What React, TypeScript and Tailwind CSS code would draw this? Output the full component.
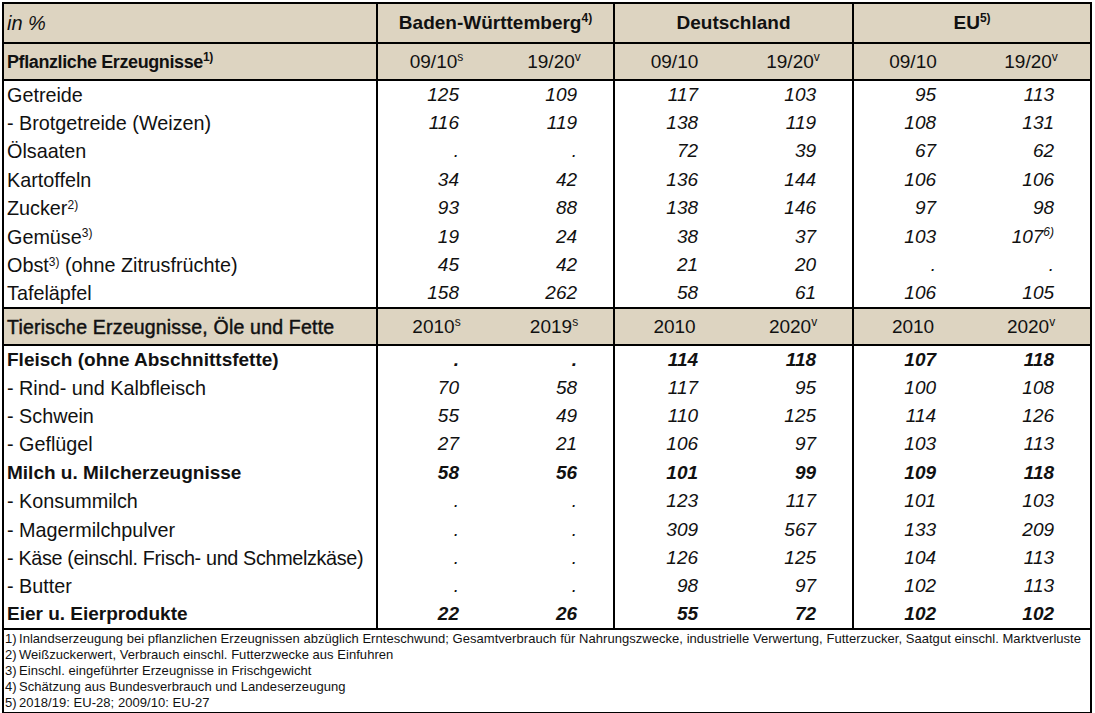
import React from "react";

type Row = {
  label: React.ReactNode;
  vals: React.ReactNode[];
  bold?: boolean;
  tight?: boolean;
};

const S = ({ children }: { children: React.ReactNode }) => (
  <sup className="text-[12px] top-[-0.55em]">{children}</sup>
);

const plant: Row[] = [
  { label: "Getreide", vals: ["125", "109", "117", "103", "95", "113"] },
  { label: "- Brotgetreide (Weizen)", vals: ["116", "119", "138", "119", "108", "131"] },
  { label: "Ölsaaten", vals: [".", ".", "72", "39", "67", "62"] },
  { label: "Kartoffeln", vals: ["34", "42", "136", "144", "106", "106"] },
  { label: <>Zucker<S>2)</S></>, vals: ["93", "88", "138", "146", "97", "98"] },
  {
    label: <>Gemüse<S>3)</S></>,
    vals: ["19", "24", "38", "37", "103", <>107<S>6)</S></>],
  },
  {
    label: <>Obst<S>3)</S> (ohne Zitrusfrüchte)</>,
    vals: ["45", "42", "21", "20", ".", "."],
  },
  { label: "Tafeläpfel", vals: ["158", "262", "58", "61", "106", "105"] },
];

const animal: Row[] = [
  { label: "Fleisch (ohne Abschnittsfette)", vals: [".", ".", "114", "118", "107", "118"], bold: true },
  { label: "- Rind- und Kalbfleisch", vals: ["70", "58", "117", "95", "100", "108"] },
  { label: "- Schwein", vals: ["55", "49", "110", "125", "114", "126"] },
  { label: "- Geflügel", vals: ["27", "21", "106", "97", "103", "113"] },
  { label: "Milch u. Milcherzeugnisse", vals: ["58", "56", "101", "99", "109", "118"], bold: true },
  { label: "- Konsummilch", vals: [".", ".", "123", "117", "101", "103"] },
  { label: "- Magermilchpulver", vals: [".", ".", "309", "567", "133", "209"] },
  {
    label: "- Käse (einschl. Frisch- und Schmelzkäse)",
    vals: [".", ".", "126", "125", "104", "113"],
    tight: true,
  },
  { label: "- Butter", vals: [".", ".", "98", "97", "102", "113"] },
  { label: "Eier u. Eierprodukte", vals: ["22", "26", "55", "72", "102", "102"], bold: true },
];

const notes = [
  "Inlandserzeugung bei pflanzlichen Erzeugnissen abzüglich Ernteschwund; Gesamtverbrauch für Nahrungszwecke, industrielle Verwertung, Futterzucker, Saatgut einschl. Marktverluste",
  "Weißzuckerwert, Verbrauch einschl. Futterzwecke aus Einfuhren",
  "Einschl. eingeführter Erzeugnisse in Frischgewicht",
  "Schätzung aus Bundesverbrauch und Landeserzeugung",
  "2018/19: EU-28; 2009/10: EU-27",
];

function DataRows({ rows, h }: { rows: Row[]; h: string }) {
  return (
    <>
      {rows.map((r, i) => (
        <tr key={i} className={h}>
          <td
            className={`p-0 pl-[3px] border-r-2 border-black whitespace-nowrap ${
              r.bold ? "font-bold text-[19px]" : "text-[19.8px]"
            } ${r.tight ? "tracking-[-0.35px]" : ""}`}
          >
            {r.label}
          </td>
          {r.vals.map((v, j) => (
            <td
              key={j}
              className={`p-0 pr-[36px] text-right italic ${r.bold ? "font-bold" : ""} ${
                j === 1 || j === 3 ? "border-r-2 border-black" : ""
              }`}
            >
              {v}
            </td>
          ))}
        </tr>
      ))}
    </>
  );
}

export default function App() {
  const head = "bg-[#ddd4c1]";
  return (
    <div className="bg-white min-h-screen pl-[2px] pt-[2px] text-[#111] font-['Liberation_Sans',Arial,sans-serif]">
      <table className="table-fixed border-collapse border-2 border-black w-[1088px] text-[19px] leading-[22px]">
        <colgroup>
          <col className="w-[374px]" />
          <col className="w-[118px]" />
          <col className="w-[119px]" />
          <col className="w-[120px]" />
          <col className="w-[119px]" />
          <col className="w-[119px]" />
          <col className="w-[119px]" />
        </colgroup>
        <tbody>
          <tr className={`h-[40px] ${head}`}>
            <td className="p-0 pl-[3px] italic text-[20px] border-r-2 border-b-2 border-black">in %</td>
            <td colSpan={2} className="p-0 text-center font-bold border-r-2 border-b-2 border-black">
              Baden-Württemberg<S>4)</S>
            </td>
            <td colSpan={2} className="p-0 text-center font-bold border-r-2 border-b-2 border-black">
              Deutschland
            </td>
            <td colSpan={2} className="p-0 text-center font-bold border-b-2 border-black">
              EU<S>5)</S>
            </td>
          </tr>
          <tr className={`h-[37px] ${head}`}>
            <td className="p-0 pl-[3px] font-bold text-[18px] tracking-[-0.4px] border-r-2 border-b-2 border-black">
              Pflanzliche Erzeugnisse<S>1)</S>
            </td>
            <td className="p-0 text-center border-b-2 border-black">09/10<S>s</S></td>
            <td className="p-0 text-center border-r-2 border-b-2 border-black">19/20<S>v</S></td>
            <td className="p-0 text-center border-b-2 border-black">09/10</td>
            <td className="p-0 text-center border-r-2 border-b-2 border-black">19/20<S>v</S></td>
            <td className="p-0 text-center border-b-2 border-black">09/10</td>
            <td className="p-0 text-center border-b-2 border-black">19/20<S>v</S></td>
          </tr>
          <DataRows rows={plant} h="h-[28.5px]" />
          <tr className={`h-[37px] ${head}`}>
            <td className="p-0 pl-[3px] text-[19.5px] tracking-[0.2px] [-webkit-text-stroke:0.45px_#111] border-r-2 border-t-2 border-b-2 border-black whitespace-nowrap">
              Tierische Erzeugnisse, Öle und Fette
            </td>
            <td className="p-0 text-center border-t-2 border-b-2 border-black">2010<S>s</S></td>
            <td className="p-0 text-center border-r-2 border-t-2 border-b-2 border-black">2019<S>s</S></td>
            <td className="p-0 text-center border-t-2 border-b-2 border-black">2010</td>
            <td className="p-0 text-center border-r-2 border-t-2 border-b-2 border-black">2020<S>v</S></td>
            <td className="p-0 text-center border-t-2 border-b-2 border-black">2010</td>
            <td className="p-0 text-center border-t-2 border-b-2 border-black">2020<S>v</S></td>
          </tr>
          <DataRows rows={animal} h="h-[28.4px]" />
          <tr>
            <td colSpan={7} className="p-0 pl-[1px] pt-[1px] pb-[1px] border-t-2 border-black text-[13px] leading-[16px]">
              {notes.map((n, i) => (
                <div key={i} className="flex whitespace-nowrap">
                  <span className="w-[14px] shrink-0">{i + 1})</span>
                  <span className="tracking-[0.04px]">{n}</span>
                </div>
              ))}
            </td>
          </tr>
        </tbody>
      </table>
      <div className="w-[1088px] h-[4px] overflow-hidden text-right text-[11px] leading-[12px] pr-[4px] pt-[1px]">
        Stand: 11.03.21
      </div>
    </div>
  );
}
